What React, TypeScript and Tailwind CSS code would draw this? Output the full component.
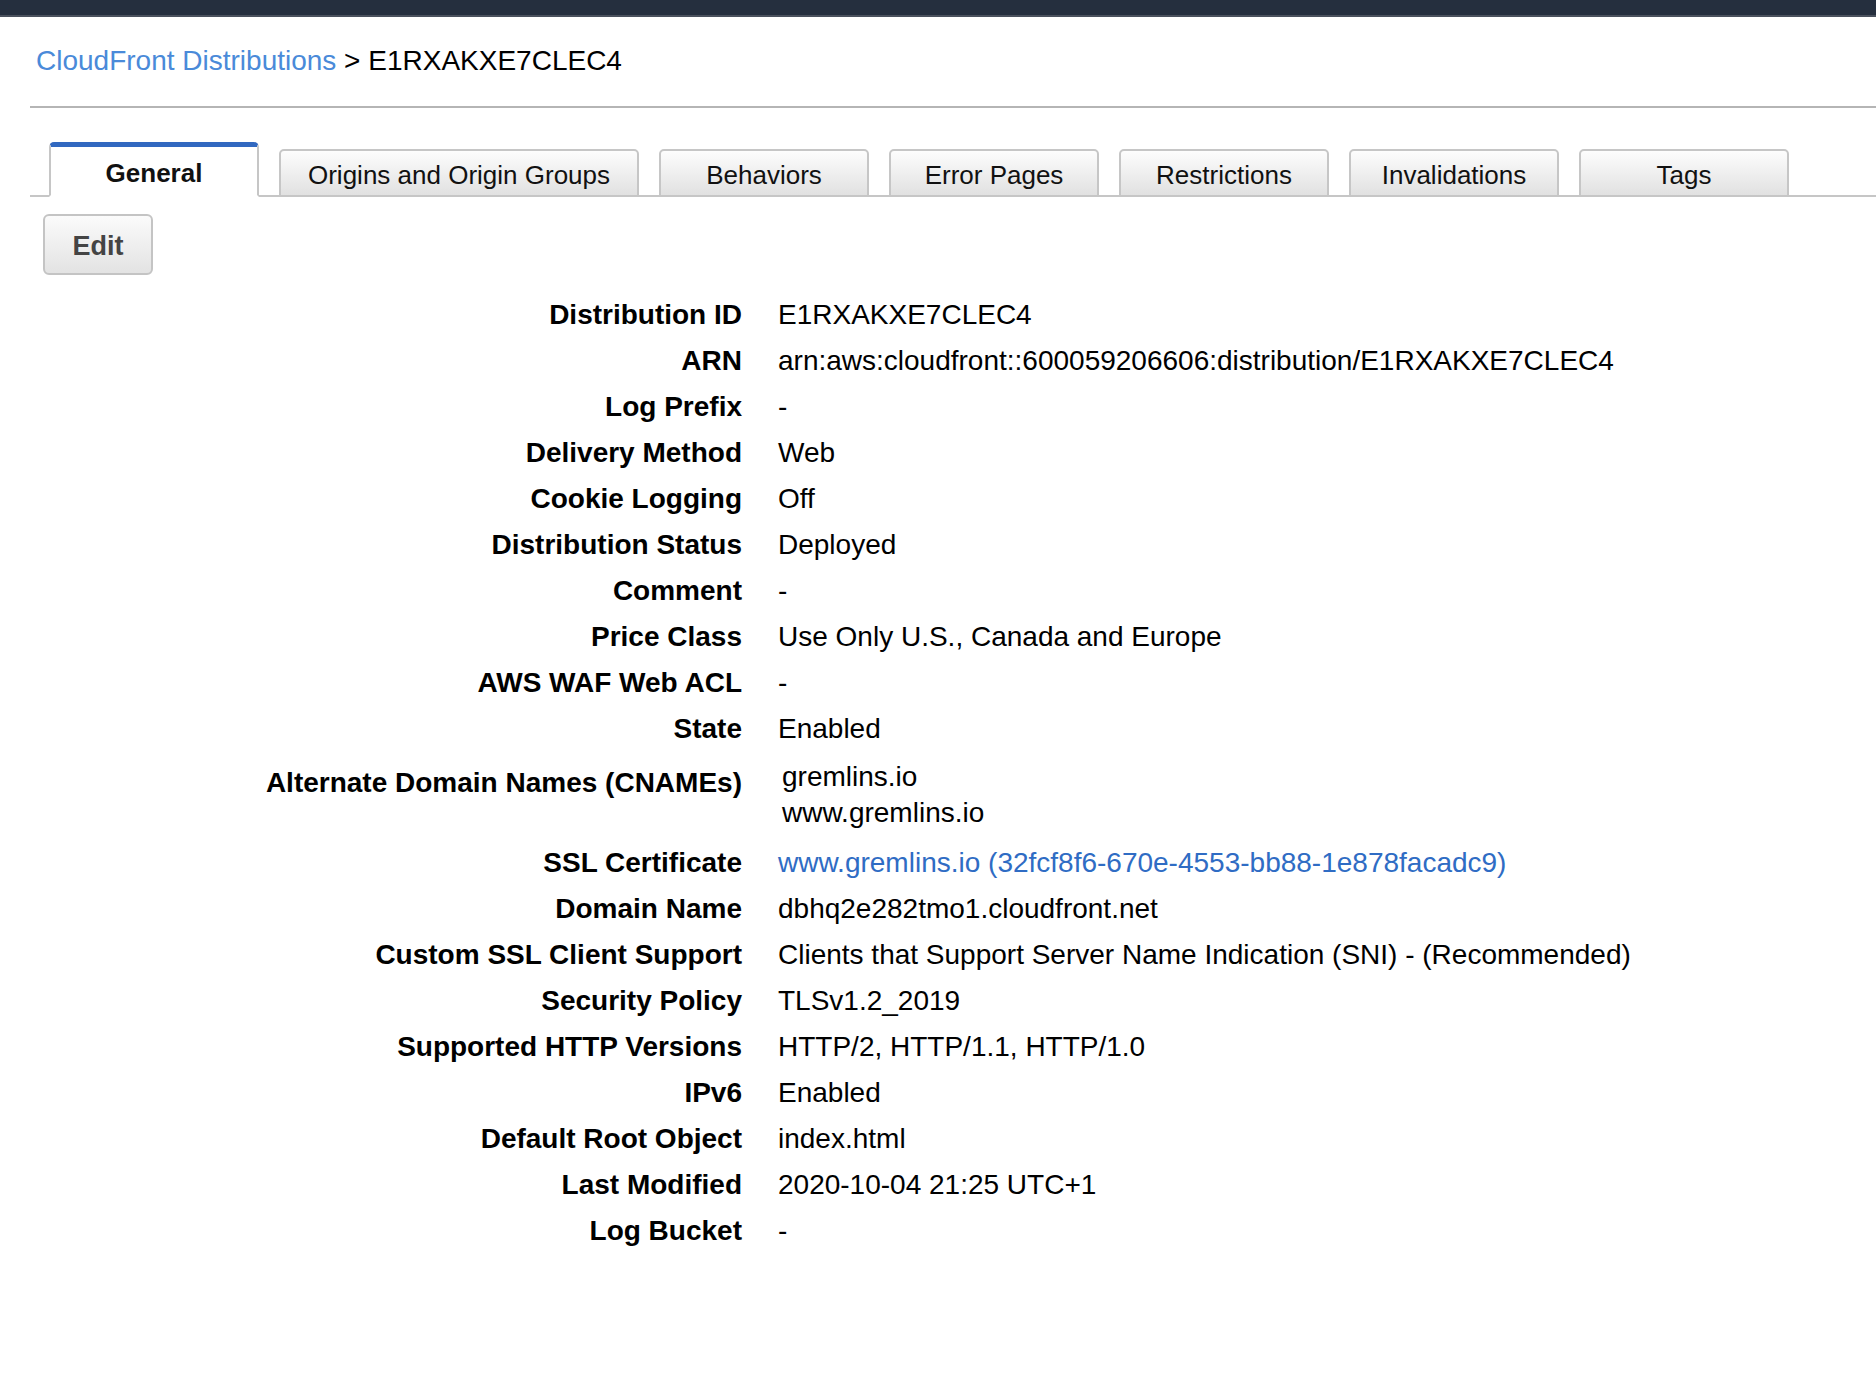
import React from "react";

type Row = { label: string; value: string; link?: boolean };

const tabs = [
  { name: "General", w: "w-[210px]" },
  { name: "Origins and Origin Groups", w: "w-[360px]" },
  { name: "Behaviors", w: "w-[210px]" },
  { name: "Error Pages", w: "w-[210px]" },
  { name: "Restrictions", w: "w-[210px]" },
  { name: "Invalidations", w: "w-[210px]" },
  { name: "Tags", w: "w-[210px]" },
];

const top: Row[] = [
  { label: "Distribution ID", value: "E1RXAKXE7CLEC4" },
  { label: "ARN", value: "arn:aws:cloudfront::600059206606:distribution/E1RXAKXE7CLEC4" },
  { label: "Log Prefix", value: "-" },
  { label: "Delivery Method", value: "Web" },
  { label: "Cookie Logging", value: "Off" },
  { label: "Distribution Status", value: "Deployed" },
  { label: "Comment", value: "-" },
  { label: "Price Class", value: "Use Only U.S., Canada and Europe" },
  { label: "AWS WAF Web ACL", value: "-" },
  { label: "State", value: "Enabled" },
];

const bottom: Row[] = [
  { label: "SSL Certificate", value: "www.gremlins.io (32fcf8f6-670e-4553-bb88-1e878facadc9)", link: true },
  { label: "Domain Name", value: "dbhq2e282tmo1.cloudfront.net" },
  { label: "Custom SSL Client Support", value: "Clients that Support Server Name Indication (SNI) - (Recommended)" },
  { label: "Security Policy", value: "TLSv1.2_2019" },
  { label: "Supported HTTP Versions", value: "HTTP/2, HTTP/1.1, HTTP/1.0" },
  { label: "IPv6", value: "Enabled" },
  { label: "Default Root Object", value: "index.html" },
  { label: "Last Modified", value: "2020-10-04 21:25 UTC+1" },
  { label: "Log Bucket", value: "-" },
];

function DetailRow({ row }: { row: Row }) {
  return (
    <div className="flex h-[46px] leading-[46px] whitespace-nowrap">
      <div className="w-[742px] shrink-0 text-right font-bold">{row.label}</div>
      <div className={row.link ? "pl-[36px] text-[#2f6cc4]" : "pl-[36px]"}>{row.value}</div>
    </div>
  );
}

export default function App() {
  return (
    <div className="min-h-[1380px] bg-white text-black font-['Liberation_Sans',Arial,sans-serif]">
      <div className="h-[15px] bg-[#252f3e]" />
      <div className="h-[2px] bg-[#4a515d]" />

      <div className="pl-[36px] pt-[27px] text-[28px] leading-[34px]">
        <a className="text-[#4a8ad9]">CloudFront Distributions</a> &gt; E1RXAKXE7CLEC4
      </div>

      <div className="mt-[28px] ml-[30px] h-[2px] bg-[#b5b5b5]" />

      <div className="mt-[34px] ml-[30px] pl-[19px] flex items-end gap-[20px] border-b-2 border-[#c6c6c6]">
        {tabs.map((t, i) =>
          i === 0 ? (
            <div
              key={t.name}
              className={`${t.w} -mb-[2px] h-[55px] flex items-center justify-center pt-1 rounded-t-[5px] border-t-[5px] border-t-[#3168c0] border-x-2 border-x-[#c6c6c6] border-b-2 border-b-white bg-white text-[26px] font-bold text-[#111]`}
            >
              {t.name}
            </div>
          ) : (
            <div
              key={t.name}
              className={`${t.w} -mb-[2px] h-[48px] flex items-center justify-center pt-1 rounded-t-[5px] border-2 border-[#c6c6c6] bg-gradient-to-b from-[#fdfdfd] to-[#e1e1e1] text-[26px] text-[#111]`}
            >
              {t.name}
            </div>
          )
        )}
      </div>

      <button className="mt-[17px] ml-[43px] w-[110px] h-[61px] pt-[4px] rounded-[6px] border-2 border-[#c4c4c4] bg-gradient-to-b from-[#fbfbfb] to-[#e3e3e3] text-[27px] font-bold text-[#444] flex items-center justify-center">
        Edit
      </button>

      <div className="mt-[17px] text-[28px]">
        {top.map((r) => (
          <DetailRow key={r.label} row={r} />
        ))}
        <div className="flex h-[88px] whitespace-nowrap">
          <div className="w-[742px] shrink-0 text-right font-bold pt-[8px] leading-[46px]">
            Alternate Domain Names (CNAMEs)
          </div>
          <div className="pl-[40px] pt-[7px] leading-[36px]">
            <div>gremlins.io</div>
            <div>www.gremlins.io</div>
          </div>
        </div>
        {bottom.map((r) => (
          <DetailRow key={r.label} row={r} />
        ))}
      </div>
    </div>
  );
}
